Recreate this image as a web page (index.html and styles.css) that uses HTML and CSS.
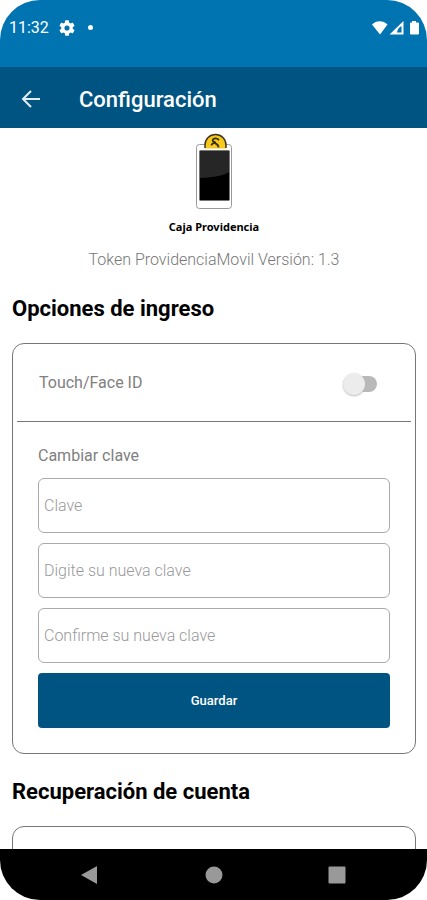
FILE: index.html
```
<!DOCTYPE html>
<html lang="es">
<head>
    <meta charset="UTF-8">
    <meta name="viewport" content="width=device-width, initial-scale=1.0">
    <title>Configuración</title>
    <link rel="stylesheet" href="styles.css">
</head>
<body>
    <div class="phone">
        <div class="status-bar">
            <span class="time">11:32</span>
            <svg class="gear" width="16" height="16" viewBox="2 2 20 20">
                <path fill="#fff" d="M19.14 12.94c.04-.3.06-.61.06-.94s-.02-.64-.07-.94l2.03-1.58a.49.49 0 0 0 .12-.61l-1.92-3.32a.49.49 0 0 0-.59-.22l-2.39.96a7 7 0 0 0-1.62-.94l-.36-2.54a.48.48 0 0 0-.48-.41h-3.84a.48.48 0 0 0-.47.41l-.36 2.54c-.59.24-1.13.57-1.62.94l-2.39-.96a.48.48 0 0 0-.59.22L2.74 8.87a.48.48 0 0 0 .12.61l2.03 1.58a6 6 0 0 0 0 1.88l-2.03 1.58a.49.49 0 0 0-.12.61l1.92 3.32c.12.22.37.29.59.22l2.39-.96c.5.38 1.03.7 1.62.94l.36 2.54c.05.24.24.41.48.41h3.84c.24 0 .44-.17.47-.41l.36-2.54a7 7 0 0 0 1.62-.94l2.39.96c.22.08.47 0 .59-.22l1.92-3.32a.48.48 0 0 0-.12-.61zM12 15.2a3.2 3.2 0 1 1 0-6.4 3.2 3.2 0 0 1 0 6.4z"/>
            </svg>
            <span class="dot"></span>
            <svg class="signals" width="50" height="16" viewBox="0 0 50 16">
                <path fill="#fff" d="M1 4.500C5 0 12.500 0 16.500 4.500L9 14.500z"/>
                <path fill="#fff" fill-rule="evenodd" d="M18.500 14.500L32.500 1v13.500zM26 12.500h4.500V6q-4 2-4.500 6.500z"/>
                <path fill="#fff" d="M41 1h4v1.500h2q1 0 1 1V13.500q0 1-1 1h-7q-1 0-1-1V3.500q0-1 1-1h1z"/>
            </svg>
        </div>
        <header class="app-bar">
            <button class="back" aria-label="Volver">
                <svg width="20" height="20" viewBox="0 0 20 20">
                    <path d="M19 10H2M10 2L2 10l8 8" fill="none" stroke="#e4edf4" stroke-width="2"/>
                </svg>
            </button>
            <h1>Configuración</h1>
        </header>

        <main class="content">
            <div class="brand">
                <svg width="38" height="78" viewBox="0 0 38 78">
                    <path d="M4.500 11.500h29q3 0 3 3v58q0 3-3 3h-29q-3 0-3-3v-58q0-3 3-3z" fill="#fff" stroke="#999"/>
                    <path d="M10 15.500V12a10.500 10.500 0 0 1 21 0v3.500z" fill="#f7c91c"/>
                    <path d="M10 15V12a10.500 10.500 0 0 1 21 0v3" fill="none" stroke="#3d3522" stroke-width="1.500"/>
                    <path d="M24 7C20.500 4 16.500 6 18 8.500s5.500 1.500 5.500 6M20.500 8.500L16 12" fill="none" stroke="#3a3000" stroke-width="1.800"/>
                    <rect x="4.500" y="17.500" width="30" height="50" rx="1" fill="#000" stroke="#777"/>
                    <path d="M5 18h29v21q-7 5-29 6z" fill="#262626"/>
                </svg>
                <p class="brand-name">Caja Providencia</p>
                <p class="version">Token ProvidenciaMovil Versión: 1.3</p>
            </div>

            <h2>Opciones de ingreso</h2>
            <section class="card">
                <div class="option">
                    <label for="touch">Touch/Face ID</label>
                    <input class="switch" type="checkbox" id="touch">
                </div>
                <form class="password-form">
                    <h3>Cambiar clave</h3>
                    <input type="password" placeholder="Clave" aria-label="Clave">
                    <input type="password" placeholder="Digite su nueva clave" aria-label="Digite su nueva clave">
                    <input type="password" placeholder="Confirme su nueva clave" aria-label="Confirme su nueva clave">
                    <button class="save" type="button">Guardar</button>
                </form>
            </section>

            <h2>Recuperación de cuenta</h2>
            <section class="card recovery"></section>
        </main>

        <nav class="nav-bar">
            <button aria-label="Atrás">
                <svg width="20" height="20" viewBox="0 0 20 20"><path d="M0 10L16 1v18z" fill="#999"/></svg>
            </button>
            <button aria-label="Inicio">
                <svg width="20" height="20" viewBox="0 0 20 20"><circle cx="10" cy="10" r="8.500" fill="#999"/></svg>
            </button>
            <button aria-label="Recientes">
                <svg width="20" height="20" viewBox="0 0 20 20"><rect x="1.500" y="1.500" width="17" height="17" rx="1" fill="#999"/></svg>
            </button>
        </nav>
    </div>
</body>
</html>
```
FILE: styles.css
```
* {
    box-sizing: border-box;
}

body {
    margin: 0;
    background-color: #fff;
    font-family: Roboto, "Liberation Sans", sans-serif;
    font-size: 16px;
}

h1, h2, h3, p {
    margin: 0;
}

button {
    border: none;
    padding: 0;
    background: none;
    font-family: inherit;
    cursor: pointer;
}

svg {
    display: block;
}

.phone {
    display: flex;
    flex-direction: column;
    height: 100vh;
    border-radius: 40px;
    overflow: hidden;
}

/* system status bar */
.status-bar {
    display: flex;
    flex-shrink: 0;
    align-items: center;
    height: 67px;
    padding: 0 6px 12px 9px;
    background-color: #0073b1;
    color: #fff;
}

.time {
    font-size: 16px;
}

.gear {
    margin-left: 10px;
}

.dot {
    width: 5px;
    height: 5px;
    margin-left: 13px;
    border-radius: 50%;
    background-color: #fff;
}

.signals {
    margin-left: auto;
}

.app-bar {
    display: flex;
    flex-shrink: 0;
    align-items: center;
    gap: 38px;
    height: 61px;
    padding: 3px 21px 0;
    background-color: #005482;
    color: #fff;
}

.app-bar h1 {
    font-size: 22px;
    font-weight: 500;
}

.content {
    flex: 1;
    min-height: 0;
    padding: 5px 11px 0 12px;
    overflow-y: auto;
    scrollbar-width: none;
}

.brand {
    display: flex;
    flex-direction: column;
    align-items: center;
}

.brand-name {
    margin-top: 6px;
    font-family: "Noto Sans", sans-serif;
    font-size: 11px;
    font-weight: 700;
    line-height: 20px;
}

.version {
    margin-top: 12px;
    color: #777;
    font-size: 16px;
    font-weight: 300;
    line-height: 22px;
}

h2 {
    padding: 24px 0 20px;
    color: #000;
    font-size: 22px;
    font-weight: 700;
    line-height: 28px;
}

.card {
    border: 1px solid #777;
    border-radius: 12px;
}

.option {
    display: flex;
    align-items: center;
    justify-content: space-between;
    height: 78px;
    margin: 0 4px;
    padding: 0 34px 0 22px;
    border-bottom: 1px solid #777;
    color: #808080;
}

.switch {
    appearance: none;
    position: relative;
    width: 34px;
    height: 16px;
    margin: 3px 0 0;
    border-radius: 8px;
    background-color: #b9b9b9;
}

.switch::before {
    content: "";
    position: absolute;
    top: -3px;
    left: 0;
    width: 22px;
    height: 22px;
    border-radius: 50%;
    background-color: #ececec;
    box-shadow: 0 1px 2px #bbb;
}

.switch:checked::before {
    left: 12px;
    background-color: #005482;
}

.password-form {
    display: flex;
    flex-direction: column;
    gap: 10px;
    padding: 22px 25px 25px;
}

.password-form h3 {
    color: #808080;
    font-size: 16px;
    font-weight: 400;
    line-height: 24px;
}

.password-form input {
    width: 100%;
    height: 55px;
    padding: 0 5px;
    border: 1px solid #aaa;
    border-radius: 6px;
    background-color: #fff;
    font-family: inherit;
    font-size: 16px;
    font-weight: 300;
}

.password-form input::placeholder {
    color: #999;
}

.save {
    height: 55px;
    border-radius: 4px;
    background-color: #005482;
    color: #fff;
    font-size: 13px;
    font-weight: 500;
}

.recovery {
    height: 160px;
}

/* system navigation */
.nav-bar {
    display: flex;
    flex-shrink: 0;
    align-items: center;
    justify-content: space-around;
    height: 51px;
    padding: 0 29px;
    background-color: #000;
}
```
